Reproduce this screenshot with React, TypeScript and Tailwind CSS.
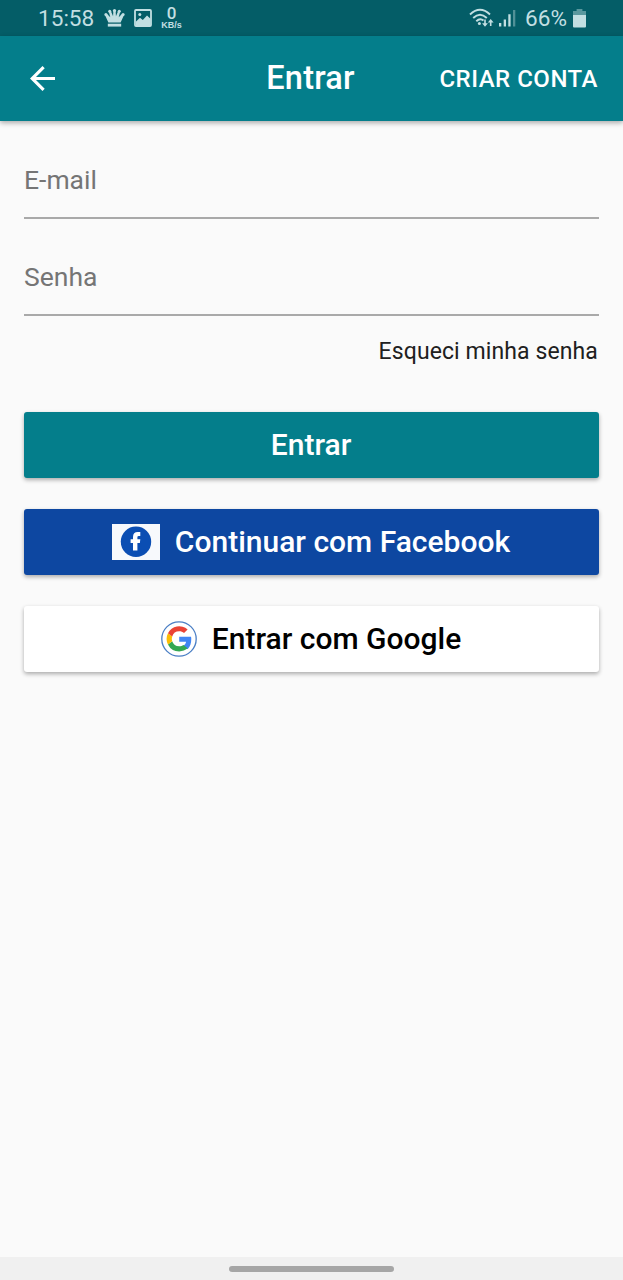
import React from "react";

function CrownIcon() {
  return (
    <svg className="ml-[10px] h-[20px] w-[21px] shrink-0" viewBox="0 0 22 20" fill="currentColor">
      <path d="M4.6 14.8 1 6.8l2.2-.9 3.4 3.4L5 3.3l2.2-.6 2.3 5.4.3-5.7h2.4l.3 5.7 2.3-5.4 2.2.6-1.6 6 3.4-3.4 2.2.9-3.6 8z" />
      <path d="M4 16h14v3H4z" />
      <circle cx="2" cy="6.3" r="1.6" />
      <circle cx="6" cy="3" r="1.6" />
      <circle cx="11" cy="2.2" r="1.7" />
      <circle cx="16" cy="3" r="1.6" />
      <circle cx="20" cy="6.3" r="1.6" />
    </svg>
  );
}

function PictureIcon() {
  return (
    <svg className="ml-[9px] h-[18px] w-[18px] shrink-0" viewBox="0 0 18 18">
      <rect x="1" y="1" width="16" height="16" rx="1" fill="none" stroke="currentColor" strokeWidth="1.8" />
      <path d="m2 12.5 4-3.7 2.8 2.3L13 6.5l3.5 3.2V16H2z" fill="currentColor" />
      <circle cx="5.8" cy="5.6" r="1.5" fill="currentColor" />
    </svg>
  );
}

function WifiIcon() {
  return (
    <svg className="h-[20px] w-[25px] shrink-0" viewBox="0 0 25 20" fill="none" stroke="currentColor" strokeWidth="1.9">
      <path d="M1 6.5Q11 -3 21 6.5M4.2 10Q11 3.5 17.8 10M7.3 13.3Q11 9.7 14.5 12.6" />
      <circle cx="10.4" cy="15.6" r="1.5" fill="currentColor" stroke="none" />
      <path d="M16 11.5v5M21.7 18V13.5" strokeWidth="1.6" />
      <path d="m13.1 15.2 2.9 3.6 2.9-3.6zM18.8 14.6l2.9-3.6 2.9 3.6z" fill="currentColor" stroke="none" />
    </svg>
  );
}

function SignalIcon() {
  return (
    <svg className="ml-[5px] h-[18px] w-[17px] shrink-0" viewBox="0 0 17 18" fill="currentColor">
      <path d="M0 14h2.3v3.5H0zM4.7 10.5H7v7H4.7zM9.3 5.3h2.3v12.2H9.3z" />
      <path d="M14 1h2.3v16.5H14z" opacity=".4" />
    </svg>
  );
}

function BatteryIcon() {
  return (
    <svg className="ml-[5px] h-[19px] w-[13px] shrink-0" viewBox="0 0 13 19" fill="currentColor">
      <path d="M3.6 0h5.8v2H13v4H0V2h3.6z" opacity=".45" />
      <path d="M0 6h13v11.5q0 1-1 1H1q-1 0-1-1z" />
    </svg>
  );
}

function StatusBar() {
  return (
    <div className="flex h-[36px] items-center bg-[#045d67] pl-[38px] pr-[37px] text-[#c2dfe2]">
      <span className="w-[56px] pt-[2px] text-[22.6px] leading-none whitespace-nowrap">15:58</span>
      <CrownIcon />
      <PictureIcon />
      <div className="ml-[8px] flex w-[23px] flex-col items-center leading-none">
        <span className="h-[14px] text-[17px] leading-[13px] font-medium">0</span>
        <span className="h-[9px] font-['Liberation_Sans',sans-serif] text-[9px] leading-[9px] font-bold whitespace-nowrap">KB/s</span>
      </div>
      <div className="ml-auto flex items-center">
        <WifiIcon />
        <SignalIcon />
        <span className="ml-[9px] w-[43px] pt-[2px] text-[22.6px] leading-none whitespace-nowrap">66%</span>
        <BatteryIcon />
      </div>
    </div>
  );
}

function Header() {
  return (
    <header className="grid h-[85px] grid-cols-[1fr_auto_1fr] items-center bg-[#047e8b] px-[24px] text-white shadow-[0_2px_5px_rgba(0,0,0,0.32)]">
      <button aria-label="Voltar" className="ml-[6px] w-[25px]">
        <svg className="block h-[25px] w-[25px]" viewBox="4 4 16 16" fill="currentColor">
          <path d="M20 11H7.83l5.59-5.59L12 4l-8 8 8 8 1.41-1.41L7.83 13H20z" />
        </svg>
      </button>
      <h1 className="pr-[2px] text-[32.5px] leading-none font-medium tracking-[0.2px]">Entrar</h1>
      <button className="justify-self-end pr-[1px] text-[24px] leading-none font-medium tracking-[0.5px] whitespace-nowrap">CRIAR CONTA</button>
    </header>
  );
}

function Field({ label, type }: { label: string; type: string }) {
  return (
    <input
      type={type}
      placeholder={label}
      aria-label={label}
      className="block h-[97px] w-full border-b-2 border-[#a9a9a9] bg-transparent pt-[20px] text-[26.5px] text-[#303030] outline-none placeholder:text-[#757575] placeholder:opacity-100"
    />
  );
}

const buttonBase =
  "flex h-[66px] w-full items-center justify-center rounded-[3px] pr-px text-[30px] leading-none font-medium whitespace-nowrap shadow-[0_2px_4px_rgba(0,0,0,0.32)]";

function FacebookLogo() {
  return (
    <svg className="mr-[15px] h-[36px] w-[48px] shrink-0" viewBox="0 0 48 36">
      <path fill="#f7f9fc" d="M0 0h48v36H0z" />
      <circle cx="24" cy="17.8" r="15.2" fill="#0b4eb3" />
      <path fill="#fff" d="M21 26.6v-7.7h-2.4v-3.7H21v-2.3q0-4.8 4.8-4.8h2.5v3.8h-1.5q-1.4 0-1.4 1.2v2.1h2.9l-.4 3.7h-2.5v7.7z" />
    </svg>
  );
}

function GoogleLogo() {
  return (
    <svg className="mr-[15px] h-[36px] w-[36px] shrink-0" viewBox="0 0 36 36">
      <circle cx="18" cy="18" r="17.2" fill="#fff" stroke="#4b7fc5" strokeWidth="1.3" />
      <g transform="translate(5.6 5.2) scale(1.05)">
        <path fill="#4285f4" d="M23.5 12.27c0-.85-.08-1.47-.24-2.12H12v4.63h6.6a5.8 5.8 0 0 1-2.45 3.85v3.17h4.04c2.3-2.2 3.31-5.5 3.31-9.53z" />
        <path fill="#34a853" d="M12 24c3.24 0 5.96-1.07 7.95-2.9l-3.9-3.17c-1.07.75-2.44 1.2-4.05 1.2a7.1 7.1 0 0 1-6.68-4.9L1.3 17.35A12 12 0 0 0 12 24z" />
        <path fill="#fbbc05" d="M5.32 14.23a7.2 7.2 0 0 1 0-4.46L1.3 6.65a12 12 0 0 0 0 10.7z" />
        <path fill="#ea4335" d="M12 4.77c1.77 0 3.35.61 4.6 1.8l3.44-3.44A12 12 0 0 0 1.3 6.65l4.02 3.12A7.1 7.1 0 0 1 12 4.77z" />
      </g>
    </svg>
  );
}

export default function App() {
  return (
    <div className="flex h-[1280px] w-full flex-col bg-[#fafafa] font-['Roboto',sans-serif]">
      <StatusBar />
      <Header />
      <main className="flex flex-1 flex-col px-[24px] pt-px">
        <Field label="E-mail" type="email" />
        <Field label="Senha" type="password" />
        <button className="mt-[22px] self-end pr-px text-[23px] leading-[27px] tracking-[0.1px] text-[#202020] whitespace-nowrap">
          Esqueci minha senha
        </button>
        <div className="mt-[47px] flex flex-col gap-[31px]">
          <button className={`${buttonBase} bg-[#047e8b] text-white`}>Entrar</button>
          <button className={`${buttonBase} bg-[#0d47a1] text-white`}>
            <FacebookLogo />
            Continuar com Facebook
          </button>
          <button className={`${buttonBase} bg-white text-black`}>
            <GoogleLogo />
            Entrar com Google
          </button>
        </div>
      </main>
      <footer className="flex h-[23px] items-center justify-center bg-[#f0f0f0]">
        <div className="h-[6px] w-[165px] rounded-full bg-[#a6a6a6]" />
      </footer>
    </div>
  );
}
